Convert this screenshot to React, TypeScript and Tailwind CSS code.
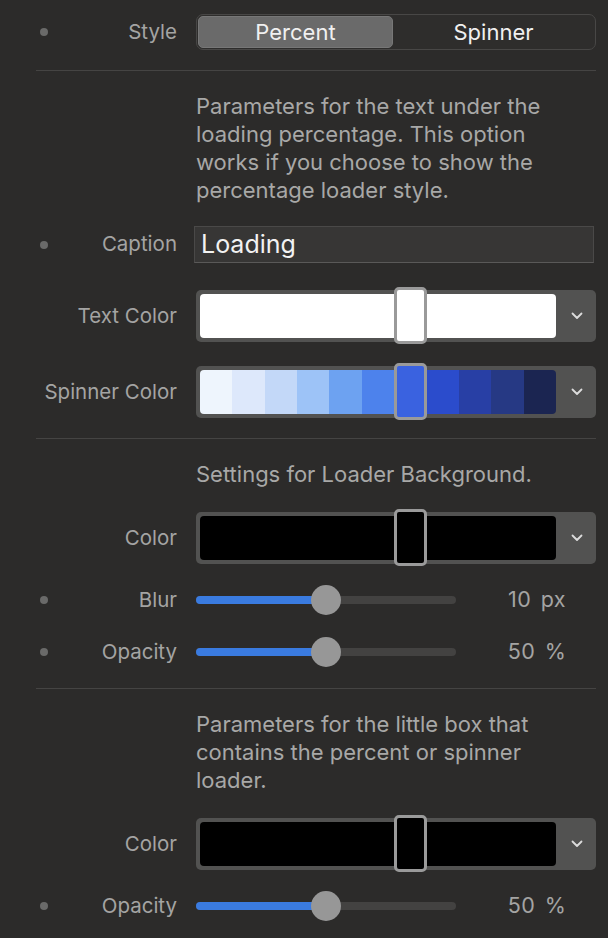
import React from 'react';

const font = { fontFamily: 'Inter, "Noto Sans", "Liberation Sans", sans-serif' };

const spinnerShades = [
  '#eef5fd',
  '#dde8fb',
  '#c3d8f8',
  '#9dc3f7',
  '#6da2f1',
  '#4d82ec',
  '#3a62e0',
  '#2b4ccc',
  '#283fa5',
  '#263984',
  '#1b2551',
];

// left column: dot + right aligned label, ends at x=177
const Label: React.FC<{ text: string; dot?: boolean }> = ({ text, dot }) => (
  <div className="w-[177px] shrink-0 flex items-center pl-[40px]">
    <span className={`w-[8px] h-[8px] shrink-0 rounded-full ${dot ? 'bg-[#6a6a69]' : 'bg-transparent'}`} />
    <div className="flex-1 min-w-0 flex justify-end">
      <span className="whitespace-nowrap text-[20.5px] leading-none text-[#a4a4a3]">{text}</span>
    </div>
  </div>
);

const Chevron = () => (
  <svg width="12" height="8" viewBox="0 0 12 8" fill="none">
    <polyline points="1.5,1.5 6,6 10.5,1.5" stroke="#dcdcdc" strokeWidth="1.8" strokeLinecap="round" strokeLinejoin="round" />
  </svg>
);

const Separator = ({ className = '' }: { className?: string }) => (
  <div className={`ml-[36px] mr-[12px] h-px bg-[#454443] ${className}`} />
);

const ColorWell: React.FC<{ fill?: string; shades?: string[]; thumb: string; className?: string }> = ({
  fill,
  shades,
  thumb,
  className = '',
}) => (
  <div className={`relative w-[400px] h-[52px] rounded-[5px] bg-[#525251] flex items-center pl-[4px] ${className}`}>
    <div className="w-[356px] h-[44px] rounded-[4px] overflow-hidden flex" style={fill ? { background: fill } : undefined}>
      {shades?.map((c) => (
        <div key={c} className="flex-1 h-full" style={{ background: c }} />
      ))}
    </div>
    <div className="flex-1 flex justify-center pl-[2px]">
      <Chevron />
    </div>
    {/* selection thumb */}
    <div
      className="absolute left-[198px] top-[-3px] w-[33px] h-[57px] rounded-[5px] border-[3px] border-[#9a9a9a]"
      style={{ background: thumb }}
    />
  </div>
);

const Slider: React.FC<{ value: number; label: string }> = ({ value, label }) => (
  <div className="flex items-center">
    <div className="relative w-[260px] h-[30px] flex items-center">
      <div className="w-full h-[8px] rounded-full bg-[#434241] overflow-hidden">
        <div className="h-full bg-[#3a7be0]" style={{ width: `${value}%` }} />
      </div>
      <div
        className="absolute top-0 w-[30px] h-[30px] rounded-full bg-[#979797]"
        style={{ left: `calc(${value}% - 15px)` }}
      />
    </div>
    <div className="w-[114px] ml-[24px] text-center text-[21.5px] leading-none text-[#a4a4a3] tracking-[0.4px] [word-spacing:3px]">
      {label}
    </div>
  </div>
);

const Note: React.FC<{ lines: string[]; className?: string }> = ({ lines, className = '' }) => (
  <p className={`ml-[196px] text-[22px] leading-[28px] text-[#a8a8a7] ${className}`}>
    {lines.map((l, i) => (
      <React.Fragment key={i}>
        {l}
        {i < lines.length - 1 && <br />}
      </React.Fragment>
    ))}
  </p>
);

export default function App() {
  return (
    <div className="w-[608px] h-[938px] bg-[#2c2b2a] overflow-hidden pt-[14px]" style={font}>
      {/* Style */}
      <div className="flex items-center">
        <Label text="Style" dot />
        <div className="ml-[19px] w-[400px] h-[36px] rounded-[7px] border border-[#484746] bg-[#2e2d2c] flex p-px">
          <div className="w-[195px] h-full rounded-[5px] bg-[#6a6a6a] border border-[#777] flex items-center justify-center text-[22px] text-[#f0f0f0]">
            Percent
          </div>
          <div className="flex-1 flex items-center justify-center text-[22px] text-[#f0f0f0]">Spinner</div>
        </div>
      </div>

      <Separator className="mt-[20px]" />

      <Note
        className="mt-[21px]"
        lines={[
          'Parameters for the text under the',
          'loading percentage. This option',
          'works if you choose to show the',
          'percentage loader style.',
        ]}
      />

      {/* Caption */}
      <div className="flex items-center mt-[22px]">
        <Label text="Caption" dot />
        <div className="ml-[17px] w-[400px] h-[37px] bg-[#373635] border border-[#4a4948] border-b-[#5a5958] flex items-center pl-[6px] text-[25px] text-[#f2f2f2]">
          Loading
        </div>
      </div>

      {/* Text Color */}
      <div className="flex items-center mt-[27px]">
        <Label text="Text Color" />
        <ColorWell className="ml-[19px]" fill="#ffffff" thumb="#ffffff" />
      </div>

      {/* Spinner Color */}
      <div className="flex items-center mt-[24px]">
        <Label text="Spinner Color" />
        <ColorWell className="ml-[19px]" shades={spinnerShades} thumb="#3a62e0" />
      </div>

      <Separator className="mt-[20px]" />

      <Note className="mt-[21px]" lines={['Settings for Loader Background.']} />

      {/* Background color */}
      <div className="flex items-center mt-[24px]">
        <Label text="Color" />
        <ColorWell className="ml-[19px]" fill="#000000" thumb="#000000" />
      </div>

      <div className="flex items-center mt-[21px]">
        <Label text="Blur" dot />
        <div className="ml-[19px]">
          <Slider value={50} label="10 px" />
        </div>
      </div>

      <div className="flex items-center mt-[22px]">
        <Label text="Opacity" dot />
        <div className="ml-[19px]">
          <Slider value={50} label="50 %" />
        </div>
      </div>

      <Separator className="mt-[21px]" />

      <Note
        className="mt-[21px]"
        lines={['Parameters for the little box that', 'contains the percent or spinner', 'loader.']}
      />

      <div className="flex items-center mt-[24px]">
        <Label text="Color" />
        <ColorWell className="ml-[19px]" fill="#000000" thumb="#000000" />
      </div>

      <div className="flex items-center mt-[21px]">
        <Label text="Opacity" dot />
        <div className="ml-[19px]">
          <Slider value={50} label="50 %" />
        </div>
      </div>
    </div>
  );
}
